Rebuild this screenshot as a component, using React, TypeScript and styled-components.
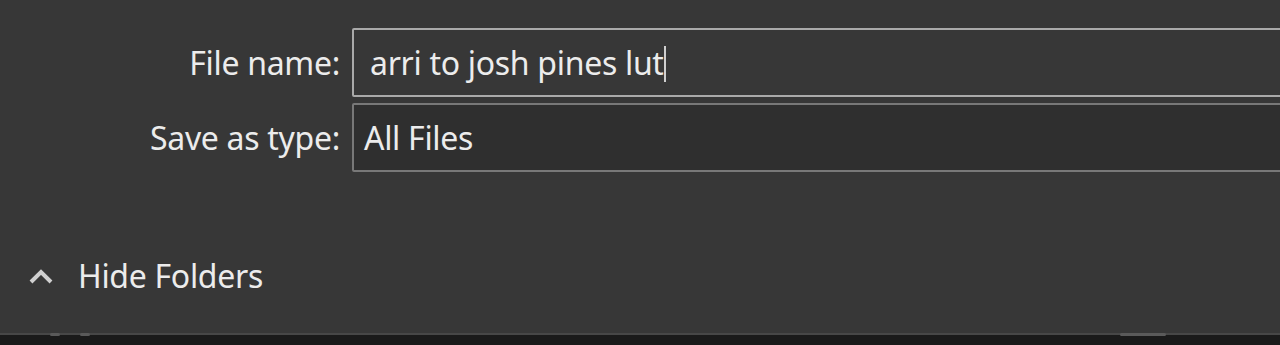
import React from "react";
import styled, { createGlobalStyle } from "styled-components";

const Global = createGlobalStyle`
  html, body {
    margin: 0;
    padding: 0;
    background: #373737;
    overflow: hidden;
  }
  #root {
    height: 345px;
  }
`;

const Dialog = styled.div`
  display: flex;
  flex-direction: column;
  width: 1280px;
  height: 345px;
  background: #373737;
  font-family: "Noto Sans", "Open Sans", sans-serif;
  color: #ececec;
  overflow: hidden;
`;

const Form = styled.div`
  display: grid;
  grid-template-columns: 340px 1fr;
  row-gap: 6px;
  padding-top: 28px;
  column-gap: 12px;
`;

const Label = styled.label`
  display: flex;
  align-items: center;
  justify-content: flex-end;
  font-size: 32px;
  letter-spacing: -0.3px;
`;

const Field = styled.div<{ $focused?: boolean }>`
  display: flex;
  align-items: center;
  height: 69px;
  box-sizing: border-box;
  margin-right: -20px;
  border: 2px solid ${(p) => (p.$focused ? "#a9a9a9" : "#787878")};
  border-radius: 2px;
  background: ${(p) => (p.$focused ? "#373737" : "#2f2f2f")};
  padding-left: ${(p) => (p.$focused ? "16px" : "10px")};
  font-size: 32px;
  letter-spacing: -0.3px;
`;

const Caret = styled.span`
  display: inline-block;
  width: 2px;
  height: 36px;
  margin-left: 0;
  background: #cfcfcf;
  vertical-align: middle;
  position: relative;
  top: -2px;
`;

const Spacer = styled.div`
  flex: 1;
`;

const Toggle = styled.button`
  display: flex;
  align-items: center;
  gap: 24px;
  margin: 0 0 36px 28px;
  padding: 0;
  border: none;
  background: none;
  color: #ececec;
  font-family: inherit;
  font-size: 32px;
  letter-spacing: -0.3px;
  cursor: default;
`;

const Footer = styled.div`
  position: relative;
  height: 10px;
  background: #1a1a1a;
  border-top: 2px solid #474747;
`;

const Blip = styled.span<{ $left: number; $width: number }>`
  position: absolute;
  top: -2px;
  left: ${(p) => p.$left}px;
  width: ${(p) => p.$width}px;
  height: 3px;
  border-radius: 2px;
  background: #5a5a5a;
`;

export default function App() {
  return (
    <>
      <Global />
      <Dialog>
        <Form>
          <Label>File name:</Label>
          <Field $focused>
            <span>
              arri to josh pines lut
              <Caret />
            </span>
          </Field>
          <Label>Save as type:</Label>
          <Field>All Files</Field>
        </Form>
        <Spacer />
        <Toggle>
          <svg width="26" height="18" viewBox="0 0 26 18">
            <path
              d="M3 15 L13 5 L23 15"
              fill="none"
              stroke="#d0d0d0"
              strokeWidth="4"
              strokeLinejoin="miter"
            />
          </svg>
          Hide Folders
        </Toggle>
        <Footer>
          <Blip $left={50} $width={10} />
          <Blip $left={80} $width={10} />
          <Blip $left={1120} $width={46} />
        </Footer>
      </Dialog>
    </>
  );
}
